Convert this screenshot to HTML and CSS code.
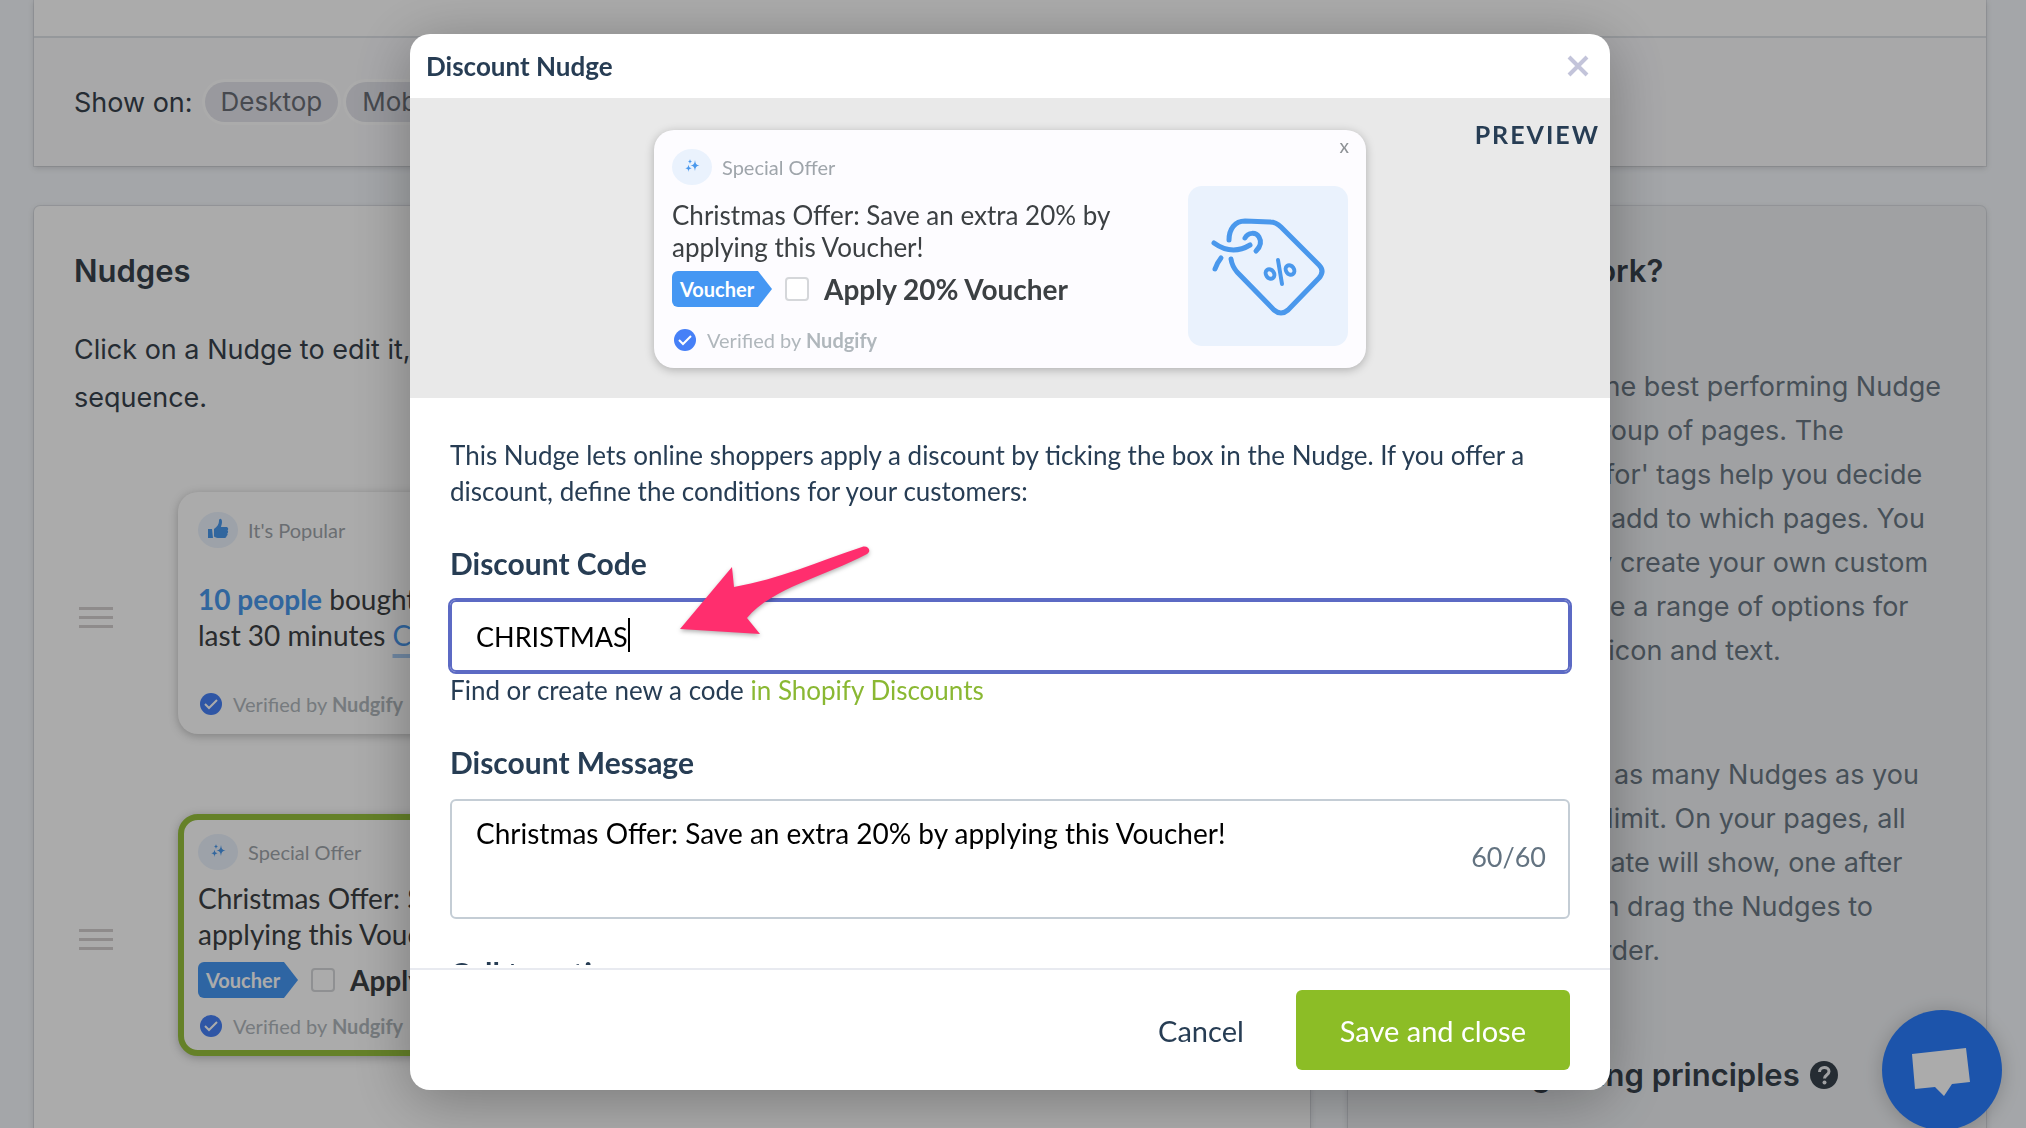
FILE: index.html
```html
<!DOCTYPE html>
<html lang="en">
<head>
  <meta charset="UTF-8">
  <meta name="viewport" content="width=device-width, initial-scale=1.0">
  <title>Discount Nudge</title>
  <link rel="stylesheet" href="styles.css">
</head>
<body>
  <svg class="sprite" aria-hidden="true">
    <symbol id="icon-sparkle" viewBox="0 0 40 36">
      <path d="M23 11c.6 4 1.200 4.800 4.500 5.500-3.300.7-3.900 1.500-4.500 5.500-.6-4-1.200-4.800-4.500-5.500 3.300-.7 3.900-1.500 4.500-5.500zM16.500 15.500c.4 2.600.8 3.200 3.200 3.700-2.400.5-2.800 1.100-3.200 3.700-.4-2.600-.8-3.200-3.200-3.700 2.400-.5 2.800-1.100 3.200-3.700zM18 10c.3 1.800.6 2.200 2.300 2.600-1.700.4-2 .8-2.300 2.600-.3-1.800-.6-2.200-2.300-2.600 1.700-.4 2-.8 2.300-2.600z"/>
    </symbol>
    <symbol id="icon-thumb" viewBox="0 0 40 36">
      <path d="M10 17h4l1 9h-5zM16 17c3-2 5-5 5-8 0-3 3-3 3 1 0 2-1 4-1 5h5c2 0 3 2 1.500 3.500 1 1 .8 2.200-.2 3 .6 1 .2 2-.8 2.500 0 1.500-1 2-2.500 2h-5c-2 0-3-.5-5-1.500z"/>
    </symbol>
    <symbol id="icon-verified" viewBox="0 0 22 22">
      <circle cx="11" cy="11" r="11" fill="#4680f7"/>
      <path d="M5 11l4 4 8-8" fill="none" stroke="#fff" stroke-width="2"/>
    </symbol>
  </svg>

  <main class="page">
    <section class="card top-card">
      <div class="top-card-rest"></div>
      <div class="show-on">
        <span class="show-on-label">Show on:</span>
        <span class="tag">Desktop</span>
        <span class="tag">Mobile</span>
      </div>
    </section>

    <div class="columns">
      <section class="card nudges">
        <h2>Nudges</h2>
        <p class="intro">Click on a Nudge to edit it, drag to change the<br>sequence.</p>

        <div class="nudge-row">
          <div class="handle"><span></span><span></span><span></span></div>
          <article class="nudge">
            <header class="nudge-head">
              <svg class="badge"><use href="#icon-thumb"/></svg>
              <span>It's Popular</span>
            </header>
            <p class="message"><strong class="highlight">10 people</strong> bought this in the<br>last 30 minutes <a href="#">Check it out</a></p>
            <footer class="verified">
              <svg><use href="#icon-verified"/></svg>
              <span>Verified by <strong>Nudgify</strong></span>
            </footer>
          </article>
        </div>

        <div class="nudge-row">
          <div class="handle"><span></span><span></span><span></span></div>
          <article class="nudge selected">
            <header class="nudge-head">
              <svg class="badge"><use href="#icon-sparkle"/></svg>
              <span>Special Offer</span>
            </header>
            <p class="message">Christmas Offer: Save an extra 20% by<br>applying this Voucher!</p>
            <label class="voucher">
              <span class="voucher-tag">Voucher</span>
              <input type="checkbox">
              <strong>Apply 20% Voucher</strong>
            </label>
            <footer class="verified">
              <svg><use href="#icon-verified"/></svg>
              <span>Verified by <strong>Nudgify</strong></span>
            </footer>
          </article>
        </div>
      </section>

      <aside class="card help">
        <h2>How does it work?</h2>
        <p>We will suggest the best performing Nudge<br>
          for each single group of pages. The<br>
          additional 'Great for' tags help you decide<br>
          which Nudges to add to which pages. You<br>
          can also certainly create your own custom<br>
          Nudges. There are a range of options for<br>
          both the Nudges icon and text.</p>
        <p>You can also add as many Nudges as you<br>
          want, there is no limit. On your pages, all<br>
          Nudges you activate will show, one after<br>
          the other. You can drag the Nudges to<br>
          rearrange their order.</p>
        <h2 class="principles">Our main guiding principles
          <svg viewBox="0 0 28 28">
            <circle cx="14" cy="14" r="14" fill="currentColor"/>
            <path d="M9.500 11c0-6 9.500-6 9.500-.5 0 3.500-4.500 3.500-4.500 7" fill="none" stroke="#eff1f4" stroke-width="3"/>
            <circle cx="14.500" cy="21.500" r="2" fill="#eff1f4"/>
          </svg>
        </h2>
      </aside>
    </div>

    <button class="chat" aria-label="Open chat">
      <svg viewBox="0 0 120 120"><path d="M30 44L84 38L88 72L70 74L62 86L53 77L33 79Z" fill="#fff"/></svg>
    </button>
  </main>

  <div class="overlay">
    <div class="modal" role="dialog" aria-labelledby="modal-title">
      <header class="modal-head">
        <h1 id="modal-title">Discount Nudge</h1>
        <button class="close" aria-label="Close">
          <svg viewBox="0 0 22 22"><path d="M2 2L20 20M20 2L2 20"/></svg>
        </button>
      </header>

      <section class="preview">
        <article class="nudge">
          <header class="nudge-head">
            <svg class="badge"><use href="#icon-sparkle"/></svg>
            <span>Special Offer</span>
          </header>
          <p class="message">Christmas Offer: Save an extra 20% by<br>applying this Voucher!</p>
          <label class="voucher">
            <span class="voucher-tag">Voucher</span>
            <input type="checkbox">
            <strong>Apply 20% Voucher</strong>
          </label>
          <footer class="verified">
            <svg><use href="#icon-verified"/></svg>
            <span>Verified by <strong>Nudgify</strong></span>
          </footer>
          <button class="nudge-close" aria-label="Dismiss">x</button>
          <svg class="offer-image" viewBox="0 0 160 160">
            <g fill="none" stroke="#4a98ec" stroke-width="5" stroke-linecap="round" stroke-linejoin="round">
              <path d="M41 54C41 43 47 35 57 35L82 36Q88 36 93 41L131 79Q137 85 131 92L100 124Q93 130 86 124L49 86Q44 80 43 73"/>
              <path d="M26 57Q44 70 62 59"/>
              <path d="M57 52C60 46 68 46 71 51C74 56 72 61 68 65"/>
              <path d="M33 72Q29 77 27 83"/>
              <g stroke-width="4">
                <ellipse cx="82" cy="88" rx="4" ry="5" transform="rotate(-35 82 88)"/>
                <ellipse cx="102" cy="84" rx="4" ry="5" transform="rotate(-35 102 84)"/>
                <path d="M90 74L94 98"/>
              </g>
            </g>
          </svg>
        </article>
        <span class="preview-label">PREVIEW</span>
      </section>

      <form class="modal-body">
        <p>This Nudge lets online shoppers apply a discount by ticking the box in the Nudge. If you offer a discount, define the conditions for your customers:</p>

        <label class="field-label" for="code">Discount Code</label>
        <div class="field">
          <input type="text" id="code" value="CHRISTMAS" autofocus>
          <span class="caret"></span>
          <svg class="arrow" viewBox="0 0 200 96">
            <path d="M4 87L56 25L58 45C104 37 140 20 186 5C192 3 196 9 191 12C150 34 96 46 71 76L84 92Z" fill="#ff2e6e"/>
          </svg>
        </div>
        <p class="hint">Find or create new a code <a href="#">in Shopify Discounts</a></p>

        <label class="field-label" for="message">Discount Message</label>
        <div class="field">
          <textarea id="message">Christmas Offer: Save an extra 20% by applying this Voucher!</textarea>
          <span class="counter">60/60</span>
        </div>

        <label class="field-label" for="cta">Call to action</label>
        <div class="field">
          <input type="text" id="cta" value="Apply 20% Voucher">
        </div>
      </form>

      <footer class="modal-foot">
        <button class="cancel">Cancel</button>
        <button class="save">Save and close</button>
      </footer>
    </div>
  </div>

  <script>
    document.getElementById('code').focus({ preventScroll: true });
  </script>
</body>
</html>
```

FILE: styles.css
```css
* {
  box-sizing: border-box;
}
body {
  margin: 0;
  height: 100vh;
  overflow: hidden;
  background: #f5f8fc;
  color: #38424c;
  font-family: Inter, sans-serif;
  font-size: 27px;
}
h1, h2, p {
  margin: 0;
}
button, input, textarea {
  font-family: inherit;
}
button {
  border: none;
  background: none;
  padding: 0;
  cursor: pointer;
}
.sprite {
  position: absolute;
  width: 0;
  height: 0;
}

/* Page behind the modal */
.page {
  padding: 0 40px 0 34px;
}
.card {
  background: #fff;
  box-shadow: 0 0 0 1px rgba(63, 63, 68, 0.1), 0 2px 6px rgba(63, 63, 68, 0.2);
}
.top-card-rest {
  height: 36px;
}
.show-on {
  display: flex;
  align-items: center;
  gap: 8px;
  height: 130px;
  padding: 0 40px;
  border-top: 2px solid #dfe3e8;
  background: #fbfbfd;
}
.show-on-label {
  padding-right: 4px;
}
.tag {
  height: 40px;
  padding: 0 16px;
  font-size: 26px;
  line-height: 40px;
  border-radius: 20px;
  background: #e4e5ec;
  color: #6a6e76;
  box-shadow: 0 0 0 3px #fff;
}
.columns {
  display: grid;
  grid-template-columns: 2fr 1fr;
  gap: 38px;
  margin-top: 40px;
}
.columns .card {
  padding: 47px 40px;
  border-radius: 6px;
}
h2 {
  font-size: 31px;
  font-weight: 600;
  line-height: 36px;
}
.intro {
  margin-top: 37px;
  line-height: 48px;
}
.nudge-row {
  display: flex;
  align-items: center;
  gap: 65px;
  margin-top: 80px;
  padding-left: 5px;
}
.intro + .nudge-row {
  margin-top: 70px;
}
.handle {
  display: flex;
  flex-direction: column;
  gap: 6px;
  margin-top: 8px;
}
.handle span {
  width: 34px;
  height: 3px;
  background: #d4cfcf;
}

/* Nudge widget */
.nudge {
  position: relative;
  display: flex;
  flex-direction: column;
  justify-content: space-between;
  width: 714px;
  height: 242px;
  padding: 20px 20px 12px;
  border-radius: 20px;
  background: #fff;
  box-shadow: 0 2px 10px rgba(0, 0, 0, 0.25);
  color: #3c4043;
  font-family: Lato, sans-serif;
}
.selected {
  padding: 14px 14px 6px;
  border: 6px solid #97c13d;
}
.nudge-head {
  display: flex;
  align-items: center;
  gap: 10px;
  color: #9fa5ab;
  font-size: 20px;
}
.badge {
  width: 40px;
  height: 36px;
  border-radius: 50%;
  background: #eaf2fd;
  fill: #4a98ec;
}
.message {
  font-size: 28px;
  line-height: 36px;
}
.message a {
  color: #4a98ec;
  text-decoration: underline 4px #a9cdf5;
  text-underline-offset: 8px;
}
.highlight {
  color: #4a98ec;
}
.voucher {
  display: flex;
  align-items: center;
  gap: 13px;
  font-size: 28px;
  line-height: 36px;
}
.voucher-tag {
  width: 100px;
  height: 36px;
  padding-left: 8px;
  border-radius: 6px;
  background: #4597f3;
  clip-path: polygon(0 0, 86% 0, 100% 50%, 86% 100%, 0 100%);
  color: #fff;
  font-size: 20px;
  font-weight: bold;
}
.voucher input {
  appearance: none;
  width: 24px;
  height: 24px;
  margin: 0 2px 0 0;
  border: 2px solid #d5d7da;
  border-radius: 4px;
  background: #fff;
}
.verified {
  display: flex;
  align-items: center;
  gap: 11px;
  height: 36px;
  padding-left: 2px;
  color: #b0b7bc;
  font-size: 20px;
}
.verified svg {
  width: 22px;
  height: 22px;
}

.help {
  color: #6b7884;
}
.columns .help {
  background: #eff1f4;
}
.help h2 {
  color: #38424c;
  white-space: nowrap;
}
.help p {
  margin-top: 76px;
  line-height: 44px;
  white-space: nowrap;
}
.help p + p {
  margin-top: 80px;
}
.principles {
  display: flex;
  align-items: center;
  gap: 10px;
  margin-top: 84px;
}
.principles svg {
  width: 28px;
  height: 28px;
}
.chat {
  position: fixed;
  right: 24px;
  bottom: -2px;
  width: 120px;
  height: 120px;
  border-radius: 50%;
  background: #2a7eff;
  box-shadow: 0 2px 20px rgba(0, 0, 0, 0.2);
}

/* Modal */
.overlay {
  position: fixed;
  inset: 0;
  display: flex;
  justify-content: center;
  padding: 34px 6px 38px 0;
  background: rgba(0, 0, 0, 0.33);
}
.modal {
  display: flex;
  flex-direction: column;
  width: 1200px;
  overflow: hidden;
  border-radius: 20px;
  background: #fff;
  box-shadow: 0 10px 60px rgba(0, 0, 0, 0.3);
  color: #273d54;
  font-family: Lato, sans-serif;
}
.modal-head {
  display: flex;
  align-items: center;
  justify-content: space-between;
  height: 64px;
  padding: 0 21px 0 16px;
}
.modal-head h1 {
  font-size: 26px;
}
.close {
  width: 22px;
  height: 22px;
}
.close svg {
  display: block;
  stroke: #c3c4da;
  stroke-width: 4;
}
.preview {
  position: relative;
  display: flex;
  justify-content: center;
  padding: 32px 0 30px;
  background: #e9e9e9;
}
.preview .nudge {
  justify-content: flex-start;
  width: 712px;
  height: 238px;
  padding: 19px 18px 9px;
  background: #fdfcff;
}
.preview .message {
  margin: 14px 0 8px;
  font-size: 26px;
  line-height: 32px;
}
.preview .verified {
  margin-top: 15px;
}
.nudge-close {
  position: absolute;
  top: 4px;
  right: 17px;
  color: #8e9296;
  font-size: 19px;
}
.offer-image {
  position: absolute;
  top: 56px;
  right: 18px;
  width: 160px;
  height: 160px;
  border-radius: 14px;
  background: #eaf2fd;
}
.preview-label {
  position: absolute;
  top: 21px;
  right: 10px;
  font-size: 25px;
  font-weight: bold;
  letter-spacing: 2px;
}
.modal-body {
  flex: 1;
  min-height: 0;
  overflow: hidden;
  margin-bottom: 3px;
  padding: 39px 40px;
  font-size: 26px;
  line-height: 36px;
}
.field-label {
  display: block;
  margin: 36px 0 19px;
  font-size: 30px;
  font-weight: bold;
}
.field {
  position: relative;
}
.field input, .field textarea {
  display: block;
  width: 100%;
  height: 72px;
  padding: 0 24px;
  border: 2px solid #c4cdd5;
  border-radius: 6px;
  font-size: 27px;
  color: #000;
}
.field input:focus {
  border-color: #5c6ac4;
  outline: 2px solid #5c6ac4;
  caret-color: transparent;
}
.field textarea {
  height: 120px;
  padding: 14px 24px;
  font-size: 28px;
  line-height: 36px;
  resize: none;
}
.caret {
  position: absolute;
  top: 18px;
  left: 178px;
  width: 2px;
  height: 34px;
  background: #000;
}
.arrow {
  position: absolute;
  top: -58px;
  left: 226px;
  width: 200px;
  height: 96px;
  filter: drop-shadow(0 2px 2px rgba(0, 0, 0, 0.3));
}
.counter {
  position: absolute;
  top: 40px;
  right: 24px;
  color: #637381;
  font-size: 27px;
}
.modal-body a {
  color: #8ab833;
  text-decoration: none;
}
.modal-foot {
  display: flex;
  align-items: center;
  justify-content: flex-end;
  gap: 52px;
  height: 122px;
  padding: 0 40px;
  border-top: 2px solid #e8eaf0;
}
.modal-foot button {
  height: 80px;
  font-size: 29px;
  color: #273d54;
}
.modal-foot .save {
  padding: 0 44px;
  border-radius: 6px;
  background: #8cbd26;
  color: #fff;
}
```
